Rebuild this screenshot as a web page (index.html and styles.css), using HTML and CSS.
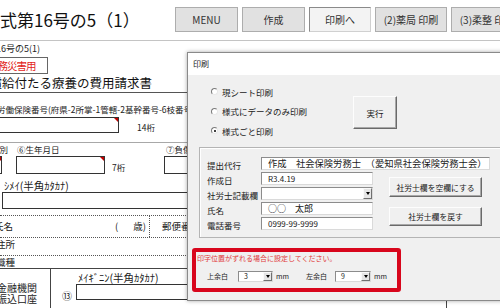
FILE: index.html
```html
<!DOCTYPE html>
<html lang="ja">
<head>
<meta charset="utf-8">
<link rel="stylesheet" href="styles.css">
</head>
<body>
<div class="page">
  <div class="sheet">
    <div class="row top">
      <div class="title">様式第16号の5（1）</div>
      <div class="tbtns">
        <div class="tbtn w63">MENU</div>
        <div class="tbtn w63">作成</div>
        <div class="tbtn w62 light">印刷へ</div>
        <div class="tbtn w72">(2)薬局 印刷</div>
        <div class="tbtn w72">(3)柔整 印刷</div>
      </div>
    </div>
    <div class="row r-form">様式第16号の5(1)</div>
    <div class="row r-kind"><div class="kindbox">業務災害用</div></div>
    <div class="row r-head">療養補償給付たる療養の費用請求書</div>
    <div class="row r-lbl1">労働保険番号(府県-2所掌-1管轄-2基幹番号-6枝番号-3)</div>
    <div class="row r-in1">
      <div class="cellbox box-lab"><span class="tri"></span></div>
      <span class="note n14">14桁</span>
    </div>
    <div class="row r-lbl2">
      <span class="l-sex">性別</span>
      <span class="l-birth">⑥生年月日</span>
      <span class="l-inj">⑦負傷年月日</span>
    </div>
    <div class="row r-in2">
      <div class="cellbox box-sex"><span class="tri"></span></div>
      <div class="cellbox box-birth"><span class="tri"></span></div>
      <span class="note n7">7桁</span>
      <div class="cellbox box-inj"></div>
    </div>
    <div class="row r-lbl3">ｼﾒｲ(半角ｶﾀｶﾅ)</div>
    <div class="row r-in3"><div class="cellbox box-kana"></div></div>
    <div class="row r-name">
      <span class="nm">氏名</span>
      <span class="age"><span>(</span><span>歳)</span></span>
      <span class="post">郵便番号</span>
    </div>
    <div class="row r-addr">住所</div>
    <div class="row r-job">職種</div>
    <div class="row r-bank">
      <div class="bank-l"><div class="bl">金融機関</div><div class="bl">振込口座</div></div>
      <div class="bank-r">
        <div class="meigi">ﾒｲｷﾞﾆﾝ(半角ｶﾀｶﾅ)</div>
        <div class="meigi-in"><span class="num13">⑬</span><div class="cellbox box-meigi"></div></div>
      </div>
      <div class="vline"></div>
    </div>
  </div>

  <div class="dialog">
    <div class="dtitle">印刷</div>
    <div class="dbody">
      <div class="dtop">
        <div class="radios">
          <div class="radio"><span class="rc"></span>現シート印刷</div>
          <div class="radio"><span class="rc"></span>様式にデータのみ印刷</div>
          <div class="radio"><span class="rc on"></span>様式ごと印刷</div>
        </div>
        <div class="wbtn exec">実行</div>
      </div>
      <div class="group">
        <div class="grow">
          <span class="glbl">提出代行</span>
          <div class="tin wide">作成　社会保険労務士　（愛知県社会保険労務士会）</div>
        </div>
        <div class="grest">
          <div class="gleft">
            <div class="grow"><span class="glbl">作成日</span><div class="tin small">R3.4.19</div></div>
            <div class="grow"><span class="glbl">社労士記載欄</span><div class="tin combo"><span class="arrow"><span class="caret"></span></span></div></div>
            <div class="grow"><span class="glbl">氏名</span><div class="tin">○○　太郎</div></div>
            <div class="grow"><span class="glbl">電話番号</span><div class="tin small">0999-99-9999</div></div>
          </div>
          <div class="gright">
            <div class="wbtn gb1">社労士欄を空欄にする</div>
            <div class="wbtn gb2">社労士欄を戻す</div>
          </div>
        </div>
      </div>
      <div class="redbox">
        <div class="rtext">印字位置がずれる場合に設定してください。</div>
        <div class="rrow">
          <span class="rl rl1">上余白</span>
          <div class="cb cb1"><span class="cv">3</span><span class="arrow"><span class="caret"></span></span></div>
          <span class="mm mm1">mm</span>
          <span class="rl rl2">左余白</span>
          <div class="cb cb2"><span class="cv">9</span><span class="arrow"><span class="caret"></span></span></div>
          <span class="mm">mm</span>
        </div>
      </div>
    </div>
  </div>
</div>
</body>
</html>
```

FILE: styles.css
```css
html, body { margin: 0; padding: 0; background: #fff; }
.page {
  position: relative;
  width: 500px;
  height: 308px;
  overflow: hidden;
  background: #fff;
  font-family: "Noto Sans CJK JP", "Noto Sans", sans-serif;
  color: #222;
}
.sheet { width: 500px; }
.row { display: flex; white-space: nowrap; box-sizing: border-box; }

/* top bar */
.top { height: 41px; border-bottom: 1px solid #c4c4c4; }
.title {
  flex: none; width: 192px; margin-left: -17px;
  font-size: 17px; line-height: 40px; color: #111;
}
.tbtns { display: flex; gap: 4px; padding-top: 7px; align-items: flex-start; }
.tbtn {
  flex: none; height: 25px; box-sizing: border-box;
  border: 1px solid #adadad; background: #e1e1e1;
  font-size: 10px; line-height: 23px; text-align: center; color: #333;
}
.tbtn.light { background: #f3f3f3; border-color: #8a8a8a #d0d0d0 #d0d0d0 #8a8a8a; }
.w63 { width: 63px; } .w62 { width: 62px; } .w72 { width: 72px; }

.r-form { height: 16px; font-size: 9px; line-height: 16px; text-indent: -31px; display: block; }
.r-kind { height: 17px; }
.kindbox {
  margin-left: -5px; width: 53px; height: 17px; box-sizing: border-box;
  border: 1px solid #666; color: #e2231a;
  font-size: 10.5px; letter-spacing: -1px; line-height: 15px; text-indent: -8px; overflow: hidden;
}
.r-head {
  display: block; height: 19px; border-bottom: 1px solid #555;
  font-size: 12.5px; line-height: 18px; text-indent: -48px; color: #111;
}
.r-lbl1 { display: block; height: 22px; font-size: 8.5px; padding-top: 10px; line-height: 12px; text-indent: -3px; }
.r-in1 { height: 28px; border-bottom: 1px solid #a8a8a8; align-items: flex-start; }
.cellbox { position: relative; box-sizing: border-box; border: 1px solid #333; background: #fff; flex: none; }
.tri {
  position: absolute; right: 0; top: 0; width: 0; height: 0;
  border-top: 4px solid #c00000; border-left: 4px solid transparent;
}
.box-lab { margin-left: -1px; margin-top: 2px; width: 120px; height: 16px; }
.note { font-size: 8.5px; flex: none; }
.n14 { margin-left: 18px; margin-top: 5px; line-height: 14px; }

.r-lbl2 { height: 13px; font-size: 8.5px; line-height: 13px; }
.l-sex { width: 17px; text-indent: -9px; overflow: visible; flex: none; }
.l-birth { width: 149px; flex: none; }
.l-inj { flex: none; }

.r-in2 { height: 18px; align-items: flex-start; }
.box-sex { margin-left: -5px; width: 7px; height: 18px; }
.box-birth { margin-left: 14px; width: 89px; height: 18px; }
.n7 { margin-left: 7px; width: 52px; line-height: 20px; margin-top: 1px; }
.box-inj { width: 60px; height: 18px; }

.r-lbl3 { display: block; height: 18px; padding-top: 6px; line-height: 12px; font-size: 10.5px; padding-left: 4px; }
.r-in3 { height: 23px; }
.box-kana { margin-left: 2px; width: 220px; height: 17px; }

.r-name {
  height: 23px; border-top: 1px dotted #555; border-bottom: 1px dotted #555;
  font-size: 9.5px; line-height: 21px;
}
.nm { width: 115px; text-indent: -6px; flex: none; }
.age { width: 35px; flex: none; display: flex; justify-content: space-between; padding-right: 3px; box-sizing: border-box; border-right: 1px dotted #555; }
.post { margin-left: 12px; }
.r-addr { display: block; height: 18px; border-bottom: 1px dotted #555; font-size: 9.5px; line-height: 13px; text-indent: -4px; }
.r-job { display: block; height: 13px; border-bottom: 1px solid #444; font-size: 9.5px; line-height: 12px; text-indent: -4px; }

.r-bank { height: 40px; }
.bank-l {
  width: 51px; flex: none; box-sizing: border-box; border-right: 1px solid #444;
  padding-top: 13px; white-space: nowrap; overflow: hidden;
}
.bl { font-size: 10px; line-height: 11px; height: 11px; text-indent: -3px; }
.bank-r { width: 395px; flex: none; }
.meigi { font-size: 10.5px; line-height: 12px; padding-top: 3px; height: 15px; box-sizing: border-box; margin-left: 27px; }
.meigi-in { display: flex; align-items: flex-start; }
.num13 { margin-left: 11px; width: 14px; font-size: 10px; line-height: 14px; margin-top: 5px; flex: none; }
.box-meigi { width: 130px; height: 16px; }
.vline { width: 0; border-left: 1px solid #444; height: 40px; }

/* dialog */
.dialog {
  position: absolute; left: 187px; top: 52px; width: 330px; height: 249px;
  box-sizing: border-box; border: 1px solid #8a8a8a; background: #f0f0f0;
  box-shadow: 0 0 4px rgba(0,0,0,0.35);
  font-size: 8.5px; color: #1a1a1a;
}
.dtitle { height: 22px; background: #fff; font-size: 8px; line-height: 22px; padding-left: 5px; }
.dbody { background: #f0f0f0; }
.dtop { display: flex; height: 72px; }
.radios { width: 142px; margin-left: 23px; padding-top: 7px; flex: none; }
.radio { display: flex; align-items: center; height: 19.5px; white-space: nowrap; }
.rc {
  width: 7px; height: 7px; box-sizing: border-box; border-radius: 50%;
  border: 1px solid; border-color: #7a7a7a #e8e8e8 #e8e8e8 #7a7a7a;
  background: #fff; margin-right: 4px; position: relative; flex: none;
}
.rc.on::after {
  content: ""; position: absolute; left: 1.5px; top: 1.5px; width: 2px; height: 2px;
  border-radius: 50%; background: #000;
}
.wbtn {
  box-sizing: border-box; background: #f0f0f0;
  border: 1px solid; border-color: #fdfdfd #6a6a6a #6a6a6a #fdfdfd;
  box-shadow: inset -1px -1px 0 #a8a8a8;
  display: flex; align-items: center; justify-content: center; white-space: nowrap;
}
.exec { margin-top: 21px; width: 44px; height: 33px; font-size: 8.5px; }

.group {
  margin-left: 11px; width: 400px; height: 91px; box-sizing: border-box;
  border: 1px solid #b4b4b4; box-shadow: inset 1px 1px 0 #fff;
  padding: 9px 0 0 7px;
}
.grow { display: flex; height: 13px; align-items: flex-start; }
.glbl { width: 54px; flex: none; font-size: 8.5px; line-height: 13px; margin-top: 2px; white-space: nowrap; }
.tin {
  position: relative; width: 112px; height: 13px; box-sizing: border-box; flex: none;
  background: #fff; border: 1px solid; border-color: #8c8c8c #dadada #dadada #8c8c8c;
  font-size: 9px; line-height: 11px; padding-left: 6px; white-space: nowrap; overflow: hidden;
}
.tin.wide { width: 229px; font-size: 9.3px; }
.tin.small { font-size: 8px; }
.grest { display: flex; margin-top: 2px; }
.gleft { display: flex; flex-direction: column; gap: 2px; }
.gright { margin-left: 16px; display: flex; flex-direction: column; }
.gb1 { margin-top: 5px; width: 93px; height: 20px; font-size: 7.8px; }
.gb2 { margin-top: 10px; width: 93px; height: 19px; font-size: 7.8px; }
.arrow {
  position: absolute; right: 0; top: 0; bottom: 0; width: 9px; box-sizing: border-box;
  background: #e6e6e6; border: 1px solid; border-color: #fafafa #707070 #707070 #fafafa;
  display: flex; align-items: center; justify-content: center;
}
.caret { width: 0; height: 0; border-top: 3px solid #000; border-left: 2.5px solid transparent; border-right: 2.5px solid transparent; }

.redbox {
  margin-left: 4px; margin-top: 10px; width: 209px; height: 44px; box-sizing: border-box;
  border: 4px solid #d8061c; border-radius: 3px; padding-left: 1px;
}
.rtext { font-size: 7px; line-height: 12px; color: #e03a3a; white-space: nowrap; }
.rrow { display: flex; align-items: center; margin-top: 6px; height: 12px; font-size: 7px; white-space: nowrap; }
.rl1 { margin-left: 10px; width: 31px; flex: none; }
.rl2 { width: 28px; flex: none; }
.cb {
  position: relative; height: 11px; box-sizing: border-box; flex: none;
  background: #fff; border: 1px solid; border-color: #8c8c8c #dadada #dadada #8c8c8c;
}
.cb1 { width: 35px; } .cb2 { width: 36px; margin-left: 1px; }
.cv { font-size: 7px; line-height: 9px; padding-left: 5px; display: block; }
.mm { margin-left: 3px; }
.mm1 { width: 30px; flex: none; margin-left: 3px; }
```
